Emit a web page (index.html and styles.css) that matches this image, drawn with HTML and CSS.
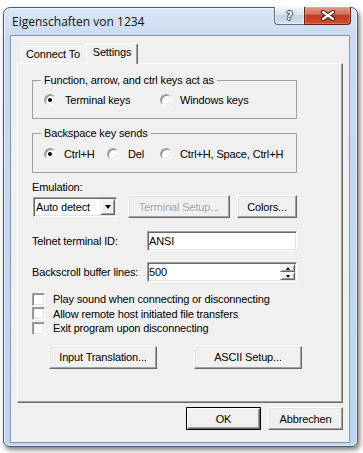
FILE: index.html
```html
<!DOCTYPE html>
<html>
<head>
<meta charset="utf-8">
<title>Eigenschaften von 1234</title>
<link rel="stylesheet" href="styles.css">
</head>
<body>
<div class="window">
  <div class="titlebar">
    <span class="title">Eigenschaften von 1234</span>
    <div class="caption-buttons">
      <div class="cap help"><span class="qmark">?</span></div>
      <div class="cap close">
        <svg width="16" height="11" viewBox="0 0 16 11">
          <path d="M3 2 L13 9 M13 2 L3 9" stroke="#3d1c16" stroke-width="4.2" stroke-linecap="round" fill="none"/>
          <path d="M3 2 L13 9 M13 2 L3 9" stroke="#ffffff" stroke-width="2.2" stroke-linecap="round" fill="none"/>
        </svg>
      </div>
    </div>
  </div>
  <div class="client">
    <div class="tabs">
      <div class="tab">Connect To</div>
      <div class="tab active">Settings</div>
    </div>
    <div class="panel">
      <fieldset class="group">
        <legend>Function, arrow, and ctrl keys act as</legend>
        <div class="options">
          <div class="opt w116"><span class="radio on"></span><span>Terminal keys</span></div>
          <div class="opt"><span class="radio"></span><span>Windows keys</span></div>
        </div>
      </fieldset>
      <fieldset class="group g2">
        <legend>Backspace key sends</legend>
        <div class="options">
          <div class="opt w63"><span class="radio on"></span><span>Ctrl+H</span></div>
          <div class="opt w53"><span class="radio"></span><span>Del</span></div>
          <div class="opt"><span class="radio"></span><span>Ctrl+H, Space, Ctrl+H</span></div>
        </div>
      </fieldset>
      <div class="emu-label">Emulation:</div>
      <div class="emu-row">
        <div class="select field">
          <span class="sel-text">Auto detect</span>
          <span class="dd-btn"><span class="tri down"></span></span>
        </div>
        <div class="btn ts disabled">Terminal Setup...</div>
        <div class="btn colors">Colors...</div>
      </div>
      <div class="field-row telnet">
        <span class="lbl">Telnet terminal ID:</span>
        <div class="input field"><span class="val">ANSI</span></div>
      </div>
      <div class="field-row backscroll">
        <span class="lbl">Backscroll buffer lines:</span>
        <div class="input field">
          <span class="val">500</span>
          <span class="spin">
            <span class="spin-btn"><span class="tri up small"></span></span>
            <span class="spin-btn"><span class="tri down small"></span></span>
          </span>
        </div>
      </div>
      <div class="checks">
        <div class="check"><span class="box"></span><span>Play sound when connecting or disconnecting</span></div>
        <div class="check"><span class="box"></span><span>Allow remote host initiated file transfers</span></div>
        <div class="check"><span class="box"></span><span>Exit program upon disconnecting</span></div>
      </div>
      <div class="panel-actions">
        <div class="btn wide">Input Translation...</div>
        <div class="btn wide">ASCII Setup...</div>
      </div>
    </div>
    <div class="actions">
      <div class="btn default dlg">OK</div>
      <div class="btn dlg">Abbrechen</div>
    </div>
  </div>
</div>
</body>
</html>
```

FILE: styles.css
```css
* { box-sizing: border-box; }
html, body { margin: 0; padding: 0; }
body {
  width: 363px;
  height: 453px;
  overflow: hidden;
  background: #ffffff;
  font-family: "Liberation Sans", Arial, sans-serif;
  font-size: 11px;
  letter-spacing: -0.15px;
  color: #000;
}

.window {
  margin: 7px 0 0 3px;
  width: 355px;
  height: 440px;
  border: 1px solid #4e5c6d;
  border-radius: 7px 7px 6px 6px;
  background: linear-gradient(180deg, #dce7f4 0, #c8dbf1 28px, #bdd5f0 100%);
  box-shadow: inset 0 0 0 1px rgba(255,255,255,0.55), 2px 3px 5px rgba(0,0,0,0.5);
  display: flex;
  flex-direction: column;
}

.titlebar {
  height: 27px;
  flex: none;
  display: flex;
  justify-content: space-between;
  align-items: flex-start;
  padding: 0 6px 0 8px;
}
.title {
  font-family: "Open Sans", "Liberation Sans", sans-serif;
  font-size: 12px;
  letter-spacing: 0;
  line-height: 16px;
  margin-top: 6px;
  white-space: nowrap;
  color: #111;
}
.caption-buttons {
  display: flex;
  margin-top: -1px;
}
.cap {
  height: 18px;
  display: flex;
  align-items: center;
  justify-content: center;
}
.help {
  width: 30px;
  border: 1px solid #5d6d82;
  border-top: none;
  border-right: none;
  border-radius: 0 0 0 4px;
  background: linear-gradient(180deg, #eef3f9 0, #dbe5f0 45%, #c2d1e3 50%, #d3e0ee 100%);
  box-shadow: inset 0 0 0 1px rgba(255,255,255,0.5);
}
.qmark {
  font-family: "DejaVu Sans", sans-serif;
  font-weight: bold;
  font-size: 12px;
  line-height: 12px;
  letter-spacing: 0;
  color: #f4f7fb;
  text-shadow: 1px 0 0 #3b4a5e, -1px 0 0 #3b4a5e, 0 1px 0 #3b4a5e, 0 -1px 0 #3b4a5e;
}
.close {
  width: 47px;
  border: 1px solid #5b2418;
  border-top: none;
  border-radius: 0 0 4px 0;
  background: linear-gradient(180deg, #e59a88 0, #d4725c 42%, #bf3a22 50%, #cc4e30 100%);
  box-shadow: inset 0 0 0 1px rgba(255,200,180,0.3);
}

.client {
  margin: 0 7px 0 6px;
  height: 408px;
  flex: none;
  border: 1px solid #8796ab;
  background: #f0f0f0;
  padding: 7px 6px 0;
  display: flex;
  flex-direction: column;
}

.tabs {
  height: 20px;
  flex: none;
  display: flex;
  align-items: flex-end;
}
.tab {
  position: relative;
  height: 17px;
  width: 67px;
  margin-left: 4px;
  border-top: 1px solid #fff;
  border-left: 1px solid #fff;
  border-right: 1px solid #696969;
  border-radius: 2px 2px 0 0;
  background: #f0f0f0;
  text-align: center;
  line-height: 15px;
  padding-right: 3px;
  white-space: nowrap;
}
.tab.active {
  z-index: 1;
  width: 52px;
  height: 21px;
  margin-left: -2px;
  margin-bottom: -1px;
  padding-right: 0;
  line-height: 17px;
  box-shadow: inset -1px 0 0 #a0a0a0;
}

.panel {
  height: 340px;
  flex: none;
  border: 1px solid;
  border-color: #fff #696969 #696969 #fff;
  box-shadow: inset -1px -1px 0 #a0a0a0;
  padding: 10px 0 0 14px;
  display: flex;
  flex-direction: column;
  align-items: flex-start;
}

.group {
  margin: 0;
  width: 265px;
  border: 1px solid #a0a0a0;
  padding: 6px 8px 11px;
  min-width: 0;
}
.group legend {
  padding: 0 3px;
  line-height: 13px;
  white-space: nowrap;
}
.group.g2 { margin-top: 8px; padding-top: 7px; }

.options {
  display: flex;
  align-items: center;
  height: 14px;
  margin-left: 3px;
}
.opt {
  display: flex;
  align-items: center;
  gap: 8px;
  white-space: nowrap;
  flex: none;
}
.w116 { width: 116px; gap: 9px; }
.w63 { width: 63px; }
.w53 { width: 53px; gap: 9px; }

.radio {
  flex: none;
  width: 12px;
  height: 12px;
  border-radius: 50%;
  background: #fff;
  border: 1px solid;
  border-color: #a0a0a0 #fff #fff #a0a0a0;
  box-shadow: inset 1px 1px 0 #8a8a8a, inset -1px -1px 0 #e3e3e3;
  display: flex;
  align-items: center;
  justify-content: center;
}
.radio.on::after {
  content: "";
  width: 4px;
  height: 4px;
  border-radius: 50%;
  background: #000;
}

.emu-label {
  margin-top: 8px;
  line-height: 13px;
}
.emu-row {
  margin-top: 1px;
  height: 23px;
  display: flex;
  align-items: flex-start;
}

.field {
  background: #fff;
  border: 1px solid;
  border-color: #a0a0a0 #fff #fff #a0a0a0;
  box-shadow: inset 1px 1px 0 #696969, inset -1px -1px 0 #e3e3e3;
  padding: 1px;
  display: flex;
  align-items: stretch;
}
.select {
  margin-left: 1px;
  margin-top: 2px;
  width: 84px;
  height: 20px;
  justify-content: space-between;
}
.sel-text {
  padding-left: 1px;
  line-height: 16px;
  white-space: nowrap;
}
.dd-btn, .spin-btn {
  width: 15px;
  background: #f0f0f0;
  border: 1px solid;
  border-color: #f0f0f0 #696969 #696969 #f0f0f0;
  box-shadow: inset 1px 1px 0 #fff, inset -1px -1px 0 #a0a0a0;
  display: flex;
  align-items: center;
  justify-content: center;
}
.tri {
  width: 0;
  height: 0;
  border-left: 3.5px solid transparent;
  border-right: 3.5px solid transparent;
}
.tri.down { border-top: 4px solid #000; }
.tri.up { border-bottom: 4px solid #000; }
.tri.small { border-left-width: 2.5px; border-right-width: 2.5px; border-top-width: 3px; border-bottom-width: 3px; }
.tri.small.down { border-bottom: none; }
.tri.small.up { border-top: none; }

.btn {
  height: 23px;
  background: #f0f0f0;
  border: 1px solid;
  border-color: #fff #696969 #696969 #fff;
  box-shadow: inset -1px -1px 0 #a0a0a0, inset 1px 1px 0 #e3e3e3;
  display: flex;
  align-items: center;
  justify-content: center;
  white-space: nowrap;
  flex: none;
}
.btn.default {
  border: 1px solid #000;
  box-shadow: inset 1px 1px 0 #fff, inset -1px -1px 0 #696969, inset -2px -2px 0 #a0a0a0;
}
.btn.disabled {
  color: #a0a0a0;
  text-shadow: 1px 1px 0 #fff;
}
.btn.ts { margin-left: 11px; width: 102px; }
.btn.colors { margin-left: 7px; width: 60px; }

.field-row {
  display: flex;
  align-items: center;
  height: 20px;
}
.field-row.telnet { margin-top: 13px; }
.field-row.backscroll { margin-top: 11px; }
.lbl { width: 115px; white-space: nowrap; }
.input {
  width: 150px;
  height: 20px;
  justify-content: space-between;
}
.val { padding-left: 0; line-height: 16px; }
.spin {
  display: flex;
  flex-direction: column;
}
.spin-btn { height: 8px; }

.checks {
  margin-top: 10px;
  display: flex;
  flex-direction: column;
}
.check {
  height: 14.5px;
  display: flex;
  align-items: center;
  gap: 8px;
  white-space: nowrap;
}
.box {
  flex: none;
  width: 13px;
  height: 13px;
  background: #fff;
  border: 1px solid;
  border-color: #a0a0a0 #fff #fff #a0a0a0;
  box-shadow: inset 1px 1px 0 #8a8a8a, inset -1px -1px 0 #e3e3e3;
}

.panel-actions {
  margin-top: 10px;
  margin-left: 17px;
  display: flex;
  gap: 37px;
}
.btn.wide { width: 108px; }

.actions {
  margin-top: 4px;
  display: flex;
  justify-content: flex-end;
  gap: 7px;
}
.btn.dlg { width: 75px; }
```
